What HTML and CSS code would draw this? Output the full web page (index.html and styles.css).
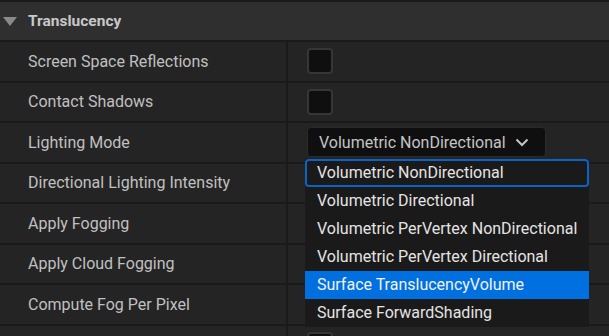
FILE: index.html
```html
<!DOCTYPE html>
<html lang="en">
<head>
    <meta charset="UTF-8">
    <meta name="viewport" content="width=device-width, initial-scale=1.0">
    <title>Translucency</title>
    <link rel="stylesheet" href="styles.css">
</head>
<body>
    <div class="details">
        <!-- Category header -->
        <div class="category">
            <span class="arrow"></span>
            <span class="category-title">Translucency</span>
        </div>

        <div class="row">
            <div class="label">Screen Space Reflections</div>
            <div class="value"><span class="checkbox"></span></div>
        </div>
        <div class="row">
            <div class="label">Contact Shadows</div>
            <div class="value"><span class="checkbox"></span></div>
        </div>
        <div class="row">
            <div class="label">Lighting Mode</div>
            <div class="value">
                <div class="combo-wrap">
                    <div class="combo">
                        <span>Volumetric NonDirectional</span>
                        <svg class="chevron" width="14" height="9" viewBox="0 0 14 9">
                            <path d="M1.5 1.5 L7 7 L12.5 1.5" fill="none" stroke="#c4c4c4" stroke-width="2"/>
                        </svg>
                    </div>

                    <!-- Open dropdown list -->
                    <ul class="menu">
                        <li class="menu-item focused">Volumetric NonDirectional</li>
                        <li class="menu-item">Volumetric Directional</li>
                        <li class="menu-item">Volumetric PerVertex NonDirectional</li>
                        <li class="menu-item">Volumetric PerVertex Directional</li>
                        <li class="menu-item selected">Surface TranslucencyVolume</li>
                        <li class="menu-item">Surface ForwardShading</li>
                    </ul>
                </div>
            </div>
        </div>
        <div class="row">
            <div class="label">Directional Lighting Intensity</div>
            <div class="value"></div>
        </div>
        <div class="row">
            <div class="label">Apply Fogging</div>
            <div class="value"></div>
        </div>
        <div class="row">
            <div class="label">Apply Cloud Fogging</div>
            <div class="value"></div>
        </div>
        <div class="row">
            <div class="label">Compute Fog Per Pixel</div>
            <div class="value"></div>
        </div>
        <div class="row">
            <div class="label"></div>
            <div class="value"><span class="checkbox"></span></div>
        </div>
    </div>
</body>
</html>
```

FILE: styles.css
```css
* {
    margin: 0;
    padding: 0;
    box-sizing: border-box;
}

body {
    font-family: 'Roboto', 'Liberation Sans', sans-serif;
    font-size: 16px;
    background-color: #1a1a1a;
    color: #c0c0c0;
    overflow: hidden;
}

.details {
    display: flex;
    flex-direction: column;
    gap: 2px;
    padding-top: 2px;
    background-color: #1a1a1a;
}

/* Category header */
.category {
    display: flex;
    align-items: center;
    height: 38px;
    background-color: #2f2f2f;
}

.arrow {
    width: 0;
    height: 0;
    margin-left: 3px;
    margin-right: 11px;
    border-left: 7px solid transparent;
    border-right: 7px solid transparent;
    border-top: 9px solid #8a8a8a;
}

.category-title {
    font-size: 15.5px;
    font-weight: bold;
    color: #c8c8c8;
}

/* Property rows */
.row {
    display: flex;
    height: 38.5px;
    background-color: #242424;
    flex-shrink: 0;
}

.label {
    width: 288px;
    display: flex;
    align-items: center;
    padding-left: 28px;
    border-right: 2px solid #1a1a1a;
}

.value {
    flex: 1;
    display: flex;
    align-items: center;
    padding-left: 19px;
}

.checkbox {
    width: 26px;
    height: 26px;
    background-color: #0f0f0f;
    border: 2px solid #363636;
    border-radius: 4px;
}

/* Combo box */
.combo-wrap {
    position: relative;
}

.combo {
    display: flex;
    align-items: center;
    width: 239px;
    height: 30px;
    padding-left: 11px;
    background-color: #0f0f0f;
    border: 1px solid #2a2a2a;
    border-radius: 4px;
    color: #c4c4c4;
}

.chevron {
    margin-left: 9px;
}

.menu {
    position: absolute;
    top: 32px;
    left: -2px;
    width: 284px;
    list-style: none;
    background-color: #1a1a1a;
    z-index: 10;
}

.menu-item {
    height: 28px;
    line-height: 28px;
    padding-left: 12px;
    color: #e4e4e4;
    white-space: nowrap;
}

.menu-item.focused {
    border: 2px solid #0b63c6;
    border-radius: 4px;
    line-height: 24px;
    padding-left: 10px;
}

.menu-item.selected {
    background-color: #0070e0;
    color: #f2f2f2;
}
```
